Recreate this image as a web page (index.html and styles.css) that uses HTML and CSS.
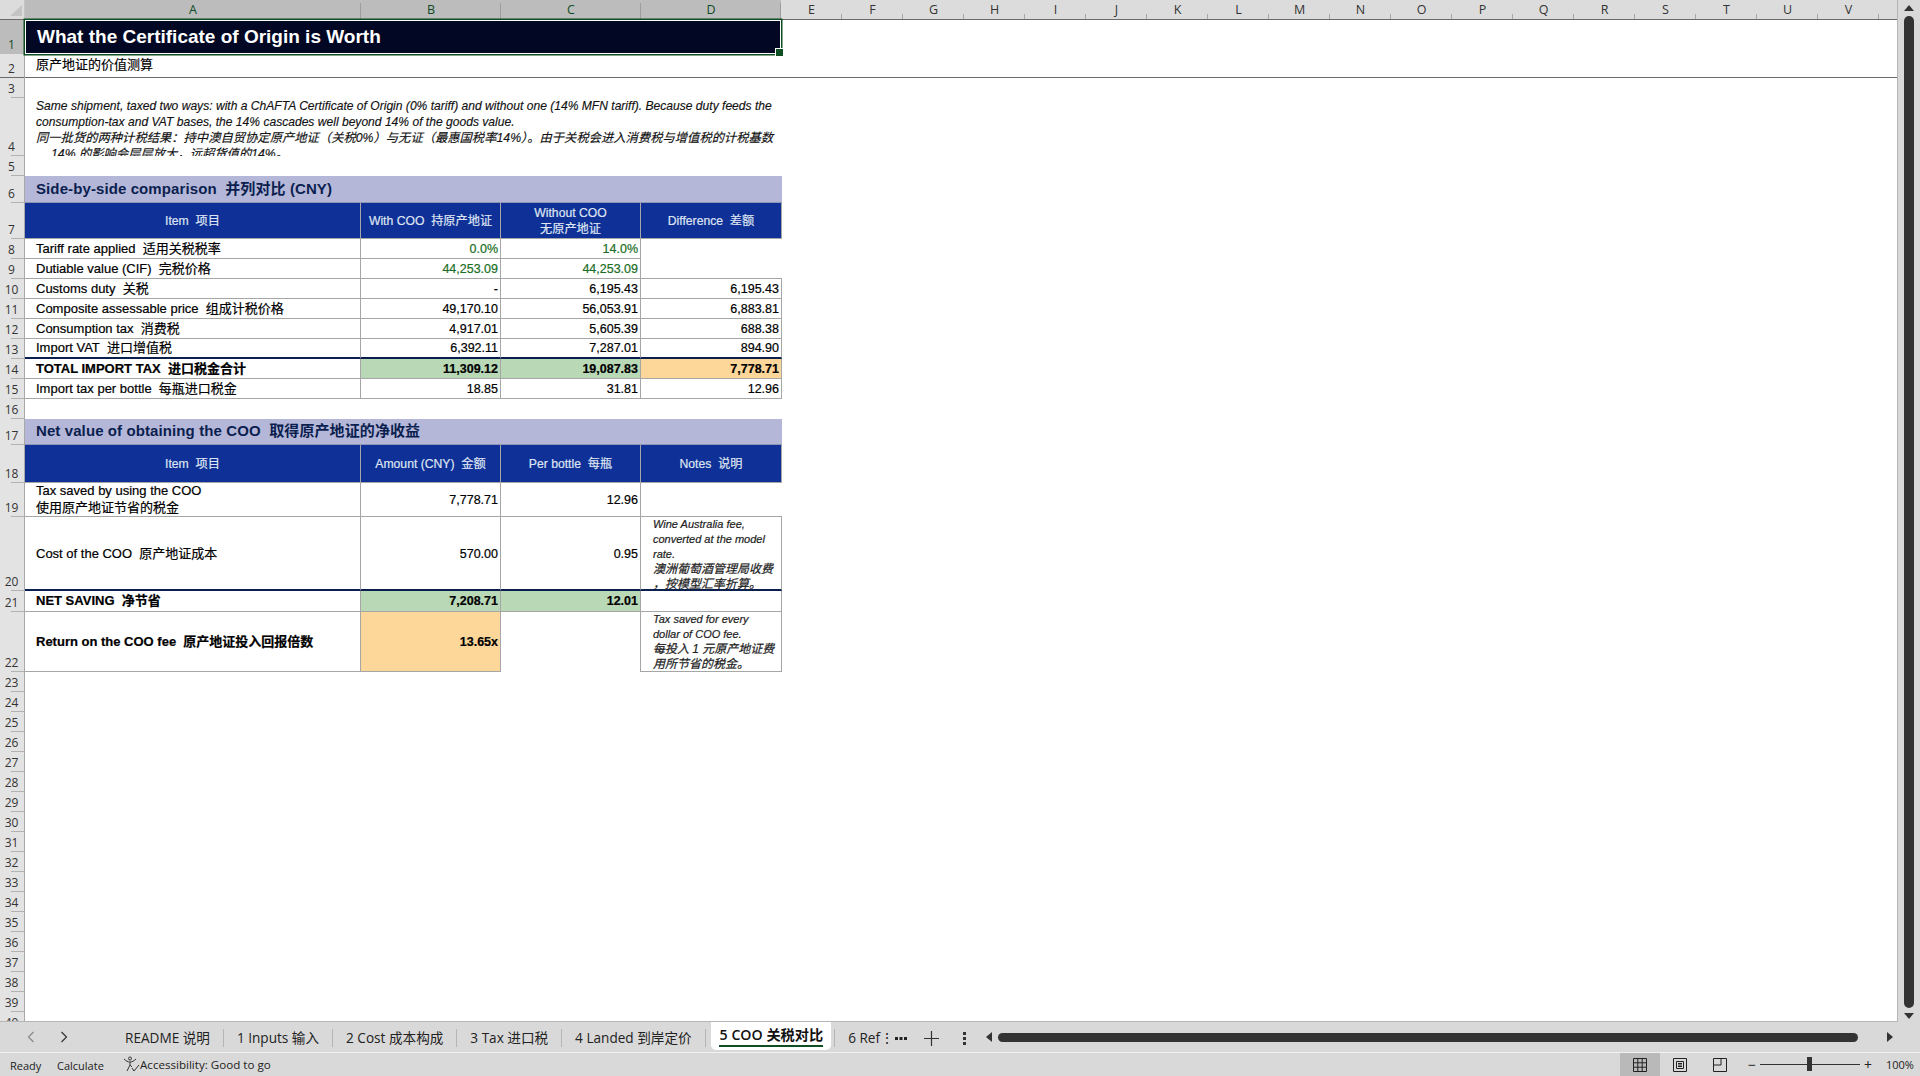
FILE: index.html
```html
<!DOCTYPE html>
<html lang="zh-CN">
<head>
<meta charset="utf-8">
<title>What the Certificate of Origin is Worth</title>
<link rel="stylesheet" href="styles.css">
</head>
<body>
<div class="app">
  <div class="workspace">
    <div class="grid-area">
      <div class="colheads">
        <div class="corner"><svg width="25" height="19" viewBox="0 0 25 19"><polygon points="22,5 22,16 10,16" fill="#c4c4c4"/></svg></div>
        <div class="ch a sel">A</div><div class="ch b sel">B</div><div class="ch c sel">C</div><div class="ch d sel">D</div>
        <div class="ch n">E</div><div class="ch n">F</div><div class="ch n">G</div><div class="ch n">H</div><div class="ch n">I</div><div class="ch n">J</div><div class="ch n">K</div><div class="ch n">L</div><div class="ch n">M</div><div class="ch n">N</div><div class="ch n">O</div><div class="ch n">P</div><div class="ch n">Q</div><div class="ch n">R</div><div class="ch n">S</div><div class="ch n">T</div><div class="ch n">U</div><div class="ch n">V</div>
        <div class="ch rest"></div>
      </div>
      <div class="body">
        <div class="rowheads">
          <div class="rh h34 sel">1</div><div class="rh h24 frozen-h">2</div><div class="rh h20">3</div><div class="rh h58">4</div><div class="rh h20">5</div><div class="rh h27">6</div><div class="rh h36">7</div><div class="rh h20">8</div><div class="rh h20">9</div><div class="rh h20">10</div><div class="rh h20">11</div><div class="rh h20">12</div><div class="rh h20">13</div><div class="rh h20">14</div><div class="rh h20">15</div><div class="rh h20">16</div><div class="rh h26">17</div><div class="rh h38">18</div><div class="rh h34">19</div><div class="rh h74">20</div><div class="rh h21">21</div><div class="rh h60">22</div><div class="rh h20">23</div><div class="rh h20">24</div><div class="rh h20">25</div><div class="rh h20">26</div><div class="rh h20">27</div><div class="rh h20">28</div><div class="rh h20">29</div><div class="rh h20">30</div><div class="rh h20">31</div><div class="rh h20">32</div><div class="rh h20">33</div><div class="rh h20">34</div><div class="rh h20">35</div><div class="rh h20">36</div><div class="rh h20">37</div><div class="rh h20">38</div><div class="rh h20">39</div><div class="rh h20">40</div>
        </div>
        <div class="sheet">
          <div class="row h34"><div class="title">What the Certificate of Origin is Worth</div></div>
          <div class="row h24 frozen"><div class="subtitle">原产地证的价值测算</div></div>
          <div class="row h20"></div>
          <div class="row h58"><div class="intro">Same shipment, taxed two ways: with a ChAFTA Certificate of Origin (0% tariff) and without one (14% MFN tariff). Because duty feeds the<br>consumption-tax and VAT bases, the 14% cascades well beyond 14% of the goods value.<br><span class="intro-cjk">同一批货的两种计税结果：持中澳自贸协定原产地证（关税0%）与无证（最惠国税率14%）。由于关税会进入消费税与增值税的计税基数</span><br><span class="intro-cjk indent">14% 的影响会层层放大，远超货值的14%。</span></div></div>
          <div class="row h20"></div>
          <div class="row h27"><div class="section">Side-by-side comparison&nbsp; 并列对比 (CNY)</div></div>
          <div class="row h36">
            <div class="cell a head">Item&nbsp; 项目</div><div class="cell b head">With COO&nbsp; 持原产地证</div><div class="cell c head">Without COO<br>无原产地证</div><div class="cell d head">Difference&nbsp; 差额</div>
          </div>
          <div class="row h20"><div class="cell a lbl">Tariff rate applied&nbsp; 适用关税税率</div><div class="cell b num in">0.0%</div><div class="cell c num in">14.0%</div><div class="cell d blank"></div></div>
          <div class="row h20"><div class="cell a lbl">Dutiable value (CIF)&nbsp; 完税价格</div><div class="cell b num in">44,253.09</div><div class="cell c num in">44,253.09</div><div class="cell d blank ruled"></div></div>
          <div class="row h20"><div class="cell a lbl">Customs duty&nbsp; 关税</div><div class="cell b num">-</div><div class="cell c num">6,195.43</div><div class="cell d num">6,195.43</div></div>
          <div class="row h20"><div class="cell a lbl">Composite assessable price&nbsp; 组成计税价格</div><div class="cell b num">49,170.10</div><div class="cell c num">56,053.91</div><div class="cell d num">6,883.81</div></div>
          <div class="row h20"><div class="cell a lbl">Consumption tax&nbsp; 消费税</div><div class="cell b num">4,917.01</div><div class="cell c num">5,605.39</div><div class="cell d num">688.38</div></div>
          <div class="row h20"><div class="cell a lbl heavy">Import VAT&nbsp; 进口增值税</div><div class="cell b num heavy">6,392.11</div><div class="cell c num heavy">7,287.01</div><div class="cell d num heavy">894.90</div></div>
          <div class="row h20"><div class="cell a lbl strong">TOTAL IMPORT TAX&nbsp; 进口税金合计</div><div class="cell b num strong green">11,309.12</div><div class="cell c num strong green">19,087.83</div><div class="cell d num strong amber">7,778.71</div></div>
          <div class="row h20"><div class="cell a lbl">Import tax per bottle&nbsp; 每瓶进口税金</div><div class="cell b num">18.85</div><div class="cell c num">31.81</div><div class="cell d num">12.96</div></div>
          <div class="row h20"></div>
          <div class="row h26"><div class="section">Net value of obtaining the COO&nbsp; 取得原产地证的净收益</div></div>
          <div class="row h38">
            <div class="cell a head">Item&nbsp; 项目</div><div class="cell b head">Amount (CNY)&nbsp; 金额</div><div class="cell c head">Per bottle&nbsp; 每瓶</div><div class="cell d head">Notes&nbsp; 说明</div>
          </div>
          <div class="row h34"><div class="cell a lbl tight">Tax saved by using the COO<br>使用原产地证节省的税金</div><div class="cell b num">7,778.71</div><div class="cell c num">12.96</div><div class="cell d blank ruled"></div></div>
          <div class="row h74"><div class="cell a lbl heavy lowered">Cost of the COO&nbsp; 原产地证成本</div><div class="cell b num heavy lowered">570.00</div><div class="cell c num heavy lowered">0.95</div><div class="cell d note heavy">Wine Australia fee,<br>converted at the model<br>rate.<br><span class="note-cjk">澳洲葡萄酒管理局收费</span><br><span class="note-cjk">，按模型汇率折算。</span></div></div>
          <div class="row h21"><div class="cell a lbl strong">NET SAVING&nbsp; 净节省</div><div class="cell b num strong green">7,208.71</div><div class="cell c num strong green">12.01</div><div class="cell d"></div></div>
          <div class="row h60"><div class="cell a lbl strong">Return on the COO fee&nbsp; 原产地证投入回报倍数</div><div class="cell b num strong amber">13.65x</div><div class="cell c empty"></div><div class="cell d note">Tax saved for every<br>dollar of COO fee.<br><span class="note-cjk">每投入 1 元原产地证费</span><br><span class="note-cjk">用所节省的税金。</span></div></div>
        </div>
      </div>
    </div>
    <div class="vscroll">
      <svg class="arrow" width="10" height="6" viewBox="0 0 10 6"><polygon points="5,0 10,6 0,6" fill="#333"/></svg>
      <div class="vthumb"></div>
      <svg class="arrow" width="10" height="6" viewBox="0 0 10 6"><polygon points="0,0 10,0 5,6" fill="#333"/></svg>
    </div>
  </div>
  <div class="tabbar">
    <div class="tabnav">
      <svg width="8" height="12" viewBox="0 0 8 12"><path d="M6.5 1 L1.5 6 L6.5 11" fill="none" stroke="#8a8a8a" stroke-width="1.2"/></svg>
      <svg width="8" height="12" viewBox="0 0 8 12"><path d="M1.5 1 L6.5 6 L1.5 11" fill="none" stroke="#333" stroke-width="1.2"/></svg>
    </div>
    <div class="tabs">
      <div class="tab first">README 说明</div>
      <div class="tab">1 Inputs 输入</div>
      <div class="tab">2 Cost 成本构成</div>
      <div class="tab">3 Tax 进口税</div>
      <div class="tab">4 Landed 到岸定价</div>
      <div class="tab active">5 COO 关税对比</div>
      <div class="tab clipped">6 Ref⋮</div>
      <svg class="more" width="12" height="3" viewBox="0 0 12 3"><path d="M0 0h3v3H0zM4.500 0h3v3h-3zM9 0h3v3H9z" fill="#222"/></svg>
      <svg class="plus" width="15" height="15" viewBox="0 0 15 15"><path d="M7.500 0v15M0 7.500h15" stroke="#333" stroke-width="1.2" fill="none"/></svg>
      <svg class="kebab" width="3" height="13" viewBox="0 0 3 13"><path d="M0 0h3v3H0zM0 5h3v3H0zM0 10h3v3H0z" fill="#333"/></svg>
    </div>
    <div class="hscroll">
      <svg width="6" height="10" viewBox="0 0 6 10"><polygon points="6,0 6,10 0,5" fill="#333"/></svg>
      <div class="hthumb"></div>
      <svg width="6" height="10" viewBox="0 0 6 10"><polygon points="0,0 0,10 6,5" fill="#333"/></svg>
    </div>
  </div>
  <div class="status">
    <span class="st-ready">Ready</span>
    <span class="st-calc">Calculate</span>
    <span class="st-acc"><svg width="17" height="17" viewBox="0 0 17 17"><g fill="none" stroke="#333" stroke-width="1"><circle cx="7" cy="2.500" r="1.500"/><path d="M1 3 C3 5 5 6 7 6 C9 6 11 5 13 3 M7 6 V9 M7 9 L4 15 M7 9 L9 11"/><path d="M9 12 L11 15 L16 9"/></g></svg>Accessibility: Good to go</span>
    <div class="st-right">
      <div class="view on"><svg width="14" height="14" viewBox="0 0 14 14"><path d="M.5.5h13v13H.5zM.5 4.800h13M.5 9.200h13M4.800.5v13M9.200.5v13" fill="none" stroke="#222"/></svg></div>
      <div class="view"><svg width="14" height="14" viewBox="0 0 14 14"><path d="M.5.5h13v13H.5zM3.500 3.500h7v7h-7zM5 5.500h4M5 7h4M5 8.500h4" fill="none" stroke="#222"/></svg></div>
      <div class="view"><svg width="14" height="14" viewBox="0 0 14 14"><path d="M.5.5h13v13H.5zM.5 7H8V.5" fill="none" stroke="#222"/></svg></div>
      <div class="zoom">
        <span class="zsign">−</span>
        <div class="ztrack"><div class="zthumb"></div></div>
        <span class="zsign">+</span>
      </div>
      <span class="zpct">100%</span>
    </div>
  </div>
</div>
</body>
</html>
```

FILE: styles.css
```css
* { box-sizing: border-box; }
html, body { margin: 0; padding: 0; height: 100%; overflow: hidden; }
body { font-family: "Liberation Sans", "Noto Sans CJK SC", sans-serif; color: #000; background: #d9d9d9; }

.app { display: flex; flex-direction: column; width: 1920px; height: 1076px; }
.workspace { display: flex; height: 1022px; flex: none; }
.grid-area { width: 1898px; display: flex; flex-direction: column; overflow: hidden; border-right: 1px solid #b5b5b5; border-bottom: 1px solid #b5b5b5; background: #fff; }

/* column headers */
.colheads { display: flex; height: 20px; flex: none; background: #dcdcdc; border-bottom: 1px solid #6b6b6b; }
.corner { width: 25px; flex: none; line-height: 0; background: #dcdcdc; border-right: 1px solid #c4c4c4; }
.ch { flex: none; text-align: center; font: 12.5px/20px "Open Sans", "Liberation Sans", sans-serif; color: #333; background: linear-gradient(#a8a8a8, #a8a8a8) right bottom / 1px 5px no-repeat; }
.ch.sel { background: #bcbcbc linear-gradient(#9d9d9d, #9d9d9d) right 3px / 1px 16px no-repeat; color: #0c4a25; }
.ch.d { width: 140px; }
.ch.n { width: 61px; }
.ch.rest { flex: 1; background: none; }
.a { width: 336px; flex: none; }
.b { width: 140px; flex: none; }
.c { width: 140px; flex: none; }
.d { width: 141px; flex: none; }

/* rows */
.body { display: flex; flex: 1; min-height: 0; }
.rowheads { width: 25px; flex: none; background: #e3e3e3; border-right: 1px solid #a8a8a8; }
.rh { display: flex; align-items: flex-end; justify-content: center; padding: 0 1px 1px 0; font: 12px/16px "Open Sans", "Liberation Sans", sans-serif; color: #333; background: linear-gradient(#b2b2b2, #b2b2b2) right bottom / 13px 1px no-repeat; }
.rh.sel { background: #bcbcbc; color: #0c4a25; }
.rh.frozen-h { background: linear-gradient(#6b6b6b, #6b6b6b) right bottom / 100% 1px no-repeat; }
.h20 { height: 20px; } .h21 { height: 21px; } .h24 { height: 24px; } .h26 { height: 26px; } .h27 { height: 27px; }
.h34 { height: 34px; } .h36 { height: 36px; } .h38 { height: 38px; } .h58 { height: 58px; } .h60 { height: 60px; } .h74 { height: 74px; }

.sheet { flex: 1; min-width: 0; background: #fff; }
.row { display: flex; }
.row.frozen { border-bottom: 1px solid #6b6b6b; }

/* title block */
.title { position: relative; width: 756px; padding: 0 0 1px 11px; display: flex; align-items: center; background: #020824; color: #fff; font-size: 19px; font-weight: bold; border: 1px solid #fff; box-shadow: 0 0 0 1.5px #0f4d23; }
.title::after { content: ""; position: absolute; right: -4px; bottom: -4px; width: 7px; height: 7px; background: #0f4d23; border: 1px solid #fff; }
.subtitle { padding-left: 11px; font-size: 13px; line-height: 22px; -webkit-text-stroke: .15px #000; }
.intro { width: 757px; height: 58px; overflow: hidden; padding: 0 0 0 11px; font-size: 12.08px; line-height: 16px; font-style: italic; color: #111; white-space: nowrap; -webkit-text-stroke: .15px #111; }
.intro-cjk { font-size: 12.3px; }
.indent { padding-left: 15px; }
.section { width: 757px; padding: 0 0 4px 11px; display: flex; align-items: center; background: #b5b7d9; color: #0b1f4f; font-size: 15px; font-weight: bold; letter-spacing: .1px; border-bottom: 1px solid #8f93b5; }

/* table cells */
.cell { display: flex; align-items: center; border-right: 1px solid #a6a6a6; border-bottom: 1px solid #a6a6a6; font-size: 12.5px; line-height: 16px; min-width: 0; -webkit-text-stroke: .2px currentColor; }
.head { justify-content: center; text-align: center; background: #0f3097; color: #dfe4f2; font-size: 12.2px; }
.lbl { padding-left: 11px; font-size: 13px; color: #000; }
.lbl.tight { display: block; line-height: 16.5px; }
.num { justify-content: flex-end; padding-right: 2px; }
.in { color: #1b6e25; }
.blank { border-bottom: none; border-right: none; }
.blank.ruled { border-bottom: 1px solid #a6a6a6; }
.empty { border-bottom: none; }
.heavy { border-bottom: 2px solid #0b1f4f; }
.lowered { padding-top: 2px; }
.strong { font-weight: bold; }
.green { background: #b9d8b6; }
.amber { background: #fdd699; }
.note { display: block; padding: 0 0 0 12px; font-size: 11px; line-height: 15px; font-style: italic; color: #222; overflow: hidden; white-space: nowrap; }
.note-cjk { font-size: 12px; }

/* vertical scrollbar */
.vscroll { flex: 1; display: flex; flex-direction: column; align-items: center; padding: 5px 0 3px; gap: 5px; background: #d9d9d9; }
.vscroll .arrow { flex: none; }
.vthumb { flex: 1; width: 10px; border-radius: 5px; background: #333; }

/* tab bar */
.tabbar { display: flex; height: 31px; flex: none; background: #d9d9d9; border-bottom: 1px solid #f2f2f2; }
.tabnav { width: 115px; flex: none; display: flex; align-items: center; gap: 25px; padding-left: 27px; }
.tabs { display: flex; align-items: flex-start; width: 860px; flex: none; font-family: "Open Sans", "Noto Sans CJK SC", sans-serif; font-size: 13.6px; color: #222; }
.tab { height: 18px; margin-top: 7px; padding: 0 13px; line-height: 18px; white-space: nowrap; border-right: 1px solid #b5b5b5; }
.tab.first { padding-left: 10px; }
.tab.active { height: 28px; margin: 0 0 0 5px; padding: 4px 8px 0 9px; font-size: 14.2px; background: #fff; font-weight: 600; color: #111; border: none; border-radius: 0 0 5px 5px; position: relative; }
.tab.active::after { content: ""; position: absolute; left: 8px; right: 8px; bottom: 3px; height: 2px; background: #0f4d23; }
.tab.clipped { border: none; border-left: 1px solid #b5b5b5; padding: 0 0 0 13px; margin-left: 3px; }
.more { margin: 15px 0 0 1px; flex: none; }
.plus { margin: 9px 0 0 17px; flex: none; }
.kebab { margin: 10px 0 0 24px; flex: none; }
.hscroll { flex: 1; display: flex; align-items: center; gap: 6px; padding-left: 12px; padding-right: 27px; margin-left: -1px; }
.hthumb { flex: 1; height: 9px; border-radius: 5px; background: #333; margin-right: 23px; }

/* status bar */
.status { display: flex; align-items: center; flex: 1; background: #d9d9d9; font-family: "Open Sans", "Liberation Sans", sans-serif; font-size: 11px; color: #222; padding-left: 10px; }
.st-ready { width: 47px; padding-top: 1px; }
.st-calc { width: 66px; padding-top: 1px; }
.st-acc { display: flex; align-items: center; font-size: 11.6px; }
.st-right { margin-left: auto; display: flex; align-items: stretch; height: 100%; }
.view { width: 40px; display: flex; align-items: center; justify-content: center; }
.view.on { background: #b9b9b9; }
.zoom { display: flex; align-items: center; gap: 4px; padding-left: 8px; width: 146px; }
.zsign { font-size: 14px; width: 8px; text-align: center; }
.ztrack { position: relative; width: 100px; height: 1px; background: #333; }
.zthumb { position: absolute; left: 47px; top: -7px; width: 5px; height: 14px; background: #333; }
.zpct { width: 34px; font-size: 11px; align-self: center; }
```
